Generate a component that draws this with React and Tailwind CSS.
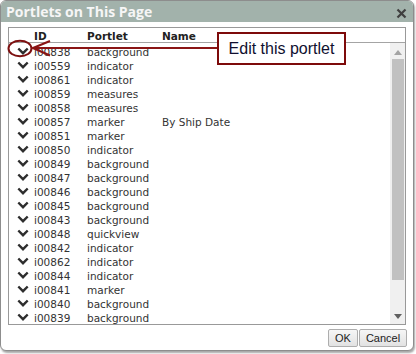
import React from 'react';

const rows = [
  ['i00838', 'background', ''],
  ['i00559', 'indicator', ''],
  ['i00861', 'indicator', ''],
  ['i00859', 'measures', ''],
  ['i00858', 'measures', ''],
  ['i00857', 'marker', 'By Ship Date'],
  ['i00851', 'marker', ''],
  ['i00850', 'indicator', ''],
  ['i00849', 'background', ''],
  ['i00847', 'background', ''],
  ['i00846', 'background', ''],
  ['i00845', 'background', ''],
  ['i00843', 'background', ''],
  ['i00848', 'quickview', ''],
  ['i00842', 'indicator', ''],
  ['i00862', 'indicator', ''],
  ['i00844', 'indicator', ''],
  ['i00841', 'marker', ''],
  ['i00840', 'background', ''],
  ['i00839', 'background', ''],
  ['i00837', 'background', ''],
];

function Chevron() {
  return (
    <svg width="12" height="8" viewBox="0 0 12 8">
      <path d="M1.3 1.5 L6 6.2 L10.7 1.5" fill="none" stroke="#2e2e2e" strokeWidth="2.4" />
    </svg>
  );
}

export default function App() {
  return (
    <div className="w-[416px] h-[354px] bg-white relative">
      <div className="w-[414px] h-[351px] border border-[#8d8d8d] rounded-[6px] overflow-hidden flex flex-col bg-white shadow-[1px_2px_2px_rgba(0,0,0,0.35)]">
        {/* Title bar */}
        <div className="h-[21px] bg-[#a2b2ab] flex items-center justify-between pl-[5px] pr-[6px] shrink-0">
          <span className="text-[14px] font-bold text-[#f6f6f6] leading-none" style={{ fontFamily: '"Open Sans", sans-serif' }}>
            Portlets on This Page
          </span>
          <svg width="11" height="11" viewBox="0 0 11 11" className="mt-[4px]">
            <path d="M1.5 1.5 L9.5 9.5 M9.5 1.5 L1.5 9.5" stroke="#3f3f3f" strokeWidth="2.2" />
          </svg>
        </div>

        {/* Body */}
        <div className="flex-1 flex flex-col px-[7px] pt-[5px]" style={{ fontFamily: '"DejaVu Sans", sans-serif' }}>
          <div className="h-[298px] border border-[#999] flex flex-col overflow-hidden">
            <div className="h-[15px] border-b border-[#a4a4a4] flex items-start pt-[2px] text-[10.5px] leading-[12px] font-bold text-[#222] shrink-0">
              <span className="w-[78px] pl-[25px]">ID</span>
              <span className="w-[75px]">Portlet</span>
              <span>Name</span>
            </div>
            <div className="flex-1 flex overflow-hidden">
              <div className="flex-1 flex flex-col pt-[1px]">
                {rows.map((r, i) => (
                  <div key={i} className="h-[14px] shrink-0 flex items-center text-[10.5px] leading-[12px] text-[#333]">
                    <span className="w-[25px] flex justify-center pl-[2px]"><Chevron /></span>
                    <span className="w-[53px] pt-[1px]">{r[0]}</span>
                    <span className="w-[75px] pt-[1px]">{r[1]}</span>
                    <span className="pt-[1px]">{r[2]}</span>
                  </div>
                ))}
              </div>
              <div className="w-[15px] bg-[#f0f0f0] flex flex-col items-center shrink-0">
                <svg width="8" height="5" viewBox="0 0 8 5" className="mt-[7px]">
                  <path d="M0 5 L4 0 L8 5 Z" fill="#a3a3a3" />
                </svg>
                <div className="w-[12px] h-[221px] bg-[#c1c1c1] mt-[4px]" />
                <svg width="8" height="5" viewBox="0 0 8 5" className="mt-[34px]">
                  <path d="M0 0 L8 0 L4 5 Z" fill="#606060" />
                </svg>
              </div>
            </div>
          </div>

          {/* Buttons */}
          <div className="flex justify-end gap-[1px] mt-[4px] -mr-[1px] text-[11px] text-[#222]" style={{ fontFamily: '"Liberation Sans", sans-serif' }}>
            <button className="w-[30px] h-[18px] border border-[#adadad] rounded-[2px] bg-gradient-to-b from-[#f6f6f6] to-[#e2e2e2] flex items-center justify-center">OK</button>
            <button className="w-[48px] h-[18px] border border-[#adadad] rounded-[2px] bg-gradient-to-b from-[#f6f6f6] to-[#e2e2e2] flex items-center justify-center">Cancel</button>
          </div>
        </div>
      </div>

      {/* Annotation overlay */}
      <svg className="absolute left-0 top-0 pointer-events-none" width="416" height="354">
        <ellipse cx="20" cy="48.5" rx="11.5" ry="7.8" fill="none" stroke="#7d1010" strokeWidth="2" />
        <path d="M33 48 L218 48" stroke="#8a1414" strokeWidth="2" />
        <path d="M50 41 L33 48 L50 55.5" fill="none" stroke="#8a1414" strokeWidth="2.2" />
      </svg>
      <div className="absolute left-[217px] top-[32px] w-[129px] h-[33px] border-2 border-[#7d0a0a] bg-white flex items-center justify-center text-[16px] text-[#101030]" style={{ fontFamily: '"Liberation Sans", sans-serif' }}>
        Edit this portlet
      </div>
    </div>
  );
}
